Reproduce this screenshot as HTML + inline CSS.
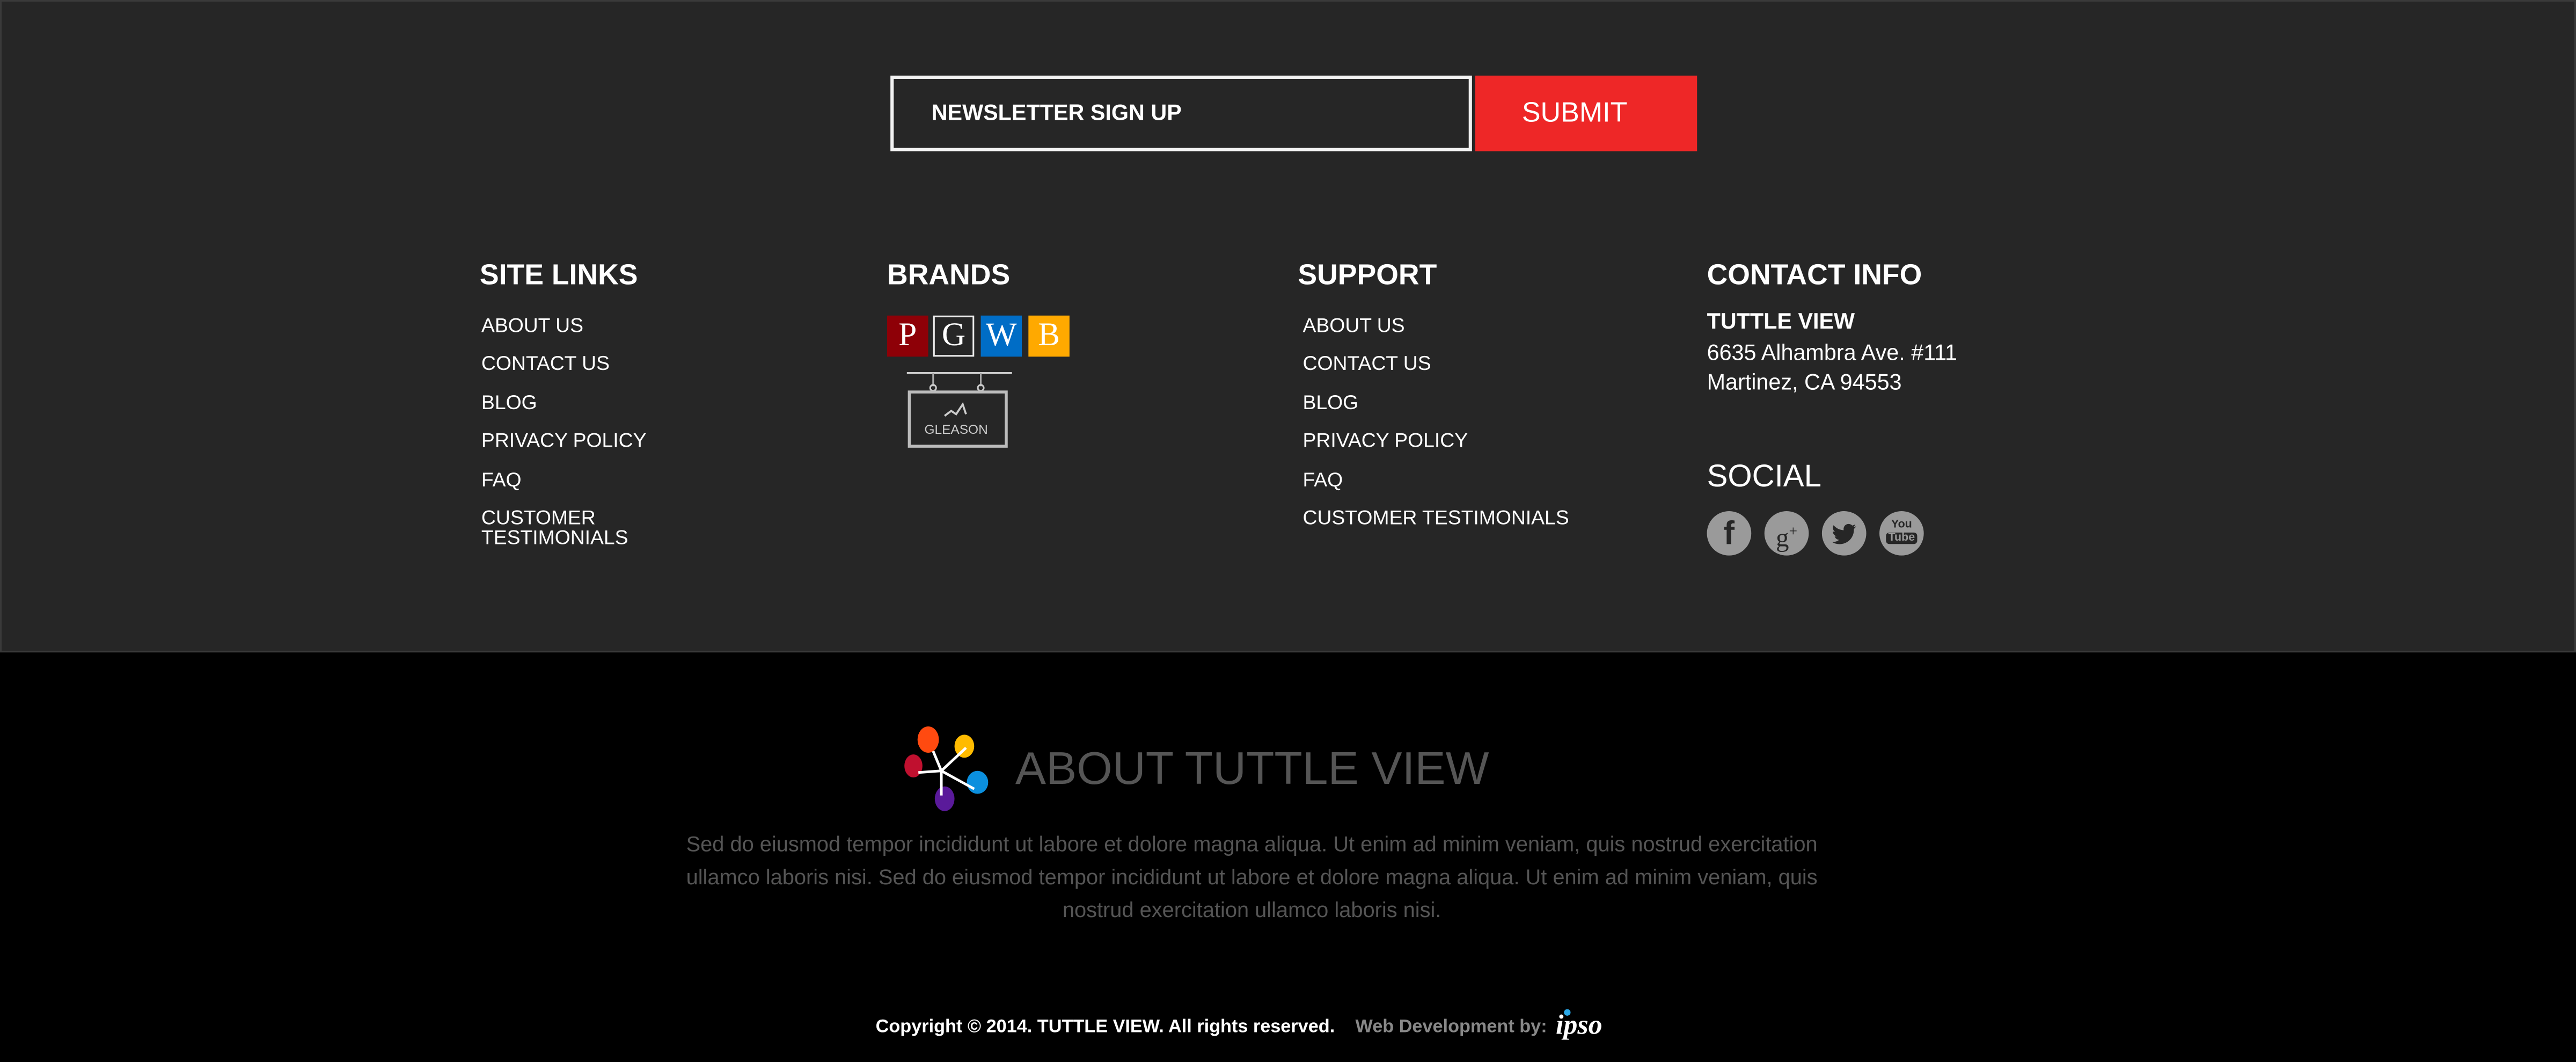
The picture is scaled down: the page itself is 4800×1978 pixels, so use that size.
<!DOCTYPE html>
<html><head><meta charset="utf-8"><style>
*{margin:0;padding:0;box-sizing:border-box}
html,body{width:4800px;height:1977px;overflow:hidden;background:#000}
#s{position:absolute;left:0;top:0;width:1568px;height:646px;transform:scale(3.0612);transform-origin:0 0;font-family:"Liberation Sans",sans-serif;color:#fff}
.top{position:absolute;left:0;top:0;width:1568px;height:397px;background:#262626;border:1px solid #3a3a3a}
.bot{position:absolute;left:0;top:397px;width:1568px;height:249px;background:#000}
.a{position:absolute;white-space:nowrap}
.h{font-size:17.5px;font-weight:bold;line-height:20px}
.l{font-size:12.2px;line-height:14px}
.sq{position:absolute;top:192px;width:25px;height:25px;font-family:"Liberation Serif",serif;font-size:20px;line-height:25px;text-align:center;color:#fff}
.ci{position:absolute;top:311px;width:27px;height:27px;border-radius:50%;background:#9a9a9a;color:#262626;text-align:center;font-weight:bold}
.p{font-size:13px;color:#555;line-height:20px;width:1568px;text-align:center;left:-22px}
</style></head><body><div id="s">
<div class="top"></div><div class="bot"></div>
<div class="a" style="left:542px;top:46px;width:354px;height:46px;border:2px solid #f2f2f2;background:#262626"></div>
<div class="a" style="left:567px;top:61px;font-size:13.5px;font-weight:bold;line-height:16px">NEWSLETTER SIGN UP</div>
<div class="a" style="left:898px;top:46px;width:135px;height:46px;background:#ee2727;font-size:17px;line-height:46px;text-align:center;padding-right:14px">SUBMIT</div>

<div class="a h" style="left:292px;top:157px">SITE LINKS</div>
<div class="a h" style="left:540px;top:157px">BRANDS</div>
<div class="a h" style="left:790px;top:157px">SUPPORT</div>
<div class="a h" style="left:1039px;top:157px">CONTACT INFO</div>

<div class="a l" style="left:293px;top:191px">ABOUT US</div>
<div class="a l" style="left:293px;top:214px">CONTACT US</div>
<div class="a l" style="left:293px;top:238px">BLOG</div>
<div class="a l" style="left:293px;top:261px">PRIVACY POLICY</div>
<div class="a l" style="left:293px;top:285px">FAQ</div>
<div class="a l" style="left:293px;top:309px;line-height:12px">CUSTOMER<br>TESTIMONIALS</div>

<div class="a l" style="left:793px;top:191px">ABOUT US</div>
<div class="a l" style="left:793px;top:214px">CONTACT US</div>
<div class="a l" style="left:793px;top:238px">BLOG</div>
<div class="a l" style="left:793px;top:261px">PRIVACY POLICY</div>
<div class="a l" style="left:793px;top:285px">FAQ</div>
<div class="a l" style="left:793px;top:308px">CUSTOMER TESTIMONIALS</div>

<div class="sq" style="left:540px;background:#8e0007">P</div>
<div class="sq" style="left:568px;background:#262626;border:1.5px solid #eee;line-height:22px">G</div>
<div class="sq" style="left:597px;background:#006dc6">W</div>
<div class="sq" style="left:626px;background:#ffa900">B</div>
<svg class="a" style="left:549px;top:222px" width="70" height="55" viewBox="0 0 70 55">
<line x1="3" y1="5" x2="67" y2="5" stroke="#ccc" stroke-width="1.2"/>
<line x1="19" y1="5" x2="19" y2="13" stroke="#aaa"/><line x1="48" y1="5" x2="48" y2="13" stroke="#aaa"/>
<circle cx="19" cy="14" r="1.8" fill="none" stroke="#ccc"/><circle cx="48" cy="14" r="1.8" fill="none" stroke="#ccc"/>
<rect x="4.5" y="16.5" width="59" height="33" fill="#262626" stroke="#bbb" stroke-width="1.8"/>
<text x="33" y="42" font-size="8" fill="#ccc" text-anchor="middle" font-family="Liberation Sans">GLEASON</text>
<path d="M26 31 l4 -3 3 2 4 -6 2 6" stroke="#ccc" fill="none" stroke-width="1.2"/>
</svg>

<div class="a" style="left:1039px;top:189px;font-size:13.5px;font-weight:bold;line-height:14px">TUTTLE VIEW</div>
<div class="a" style="left:1039px;top:206px;font-size:13.5px;line-height:18px">6635 Alhambra Ave. #111<br>Martinez, CA 94553</div>
<div class="a" style="left:1039px;top:281px;font-size:19px;line-height:20px">SOCIAL</div>
<div class="ci" style="left:1039px;font-size:20px;line-height:29px;font-family:'Liberation Sans'">f</div>
<div class="ci" style="left:1074px;font-size:16px;line-height:25px;font-weight:normal;font-family:'Liberation Serif',serif">g<sup style="font-size:9px">+</sup></div>
<div class="ci" style="left:1109px"><svg width="27" height="27" viewBox="0 0 24 24"><path d="M18.5 8.2c-.5.2-1 .4-1.6.4.6-.3 1-.9 1.2-1.5-.5.3-1.1.5-1.7.7a2.7 2.7 0 0 0-4.6 2.5C9.500 10.200 7.600 9.100 6.300 7.600c-.7 1.200-.3 2.800.8 3.600-.4 0-.8-.1-1.200-.3 0 1.300.9 2.400 2.200 2.700-.4.1-.8.1-1.200 0 .3 1.100 1.400 1.900 2.500 1.900A5.500 5.500 0 0 1 5.400 16.600 7.700 7.700 0 0 0 17.300 10v-.4c.5-.4 1-.9 1.200-1.400z" fill="#262626"/></svg></div>
<div class="ci" style="left:1144px;font-size:7px;line-height:8px;padding-top:5px;font-family:'Liberation Sans Narrow','Liberation Sans'">You<br><span style="background:#262626;color:#9a9a9a;border-radius:2px;padding:0 1px">Tube</span></div>

<svg class="a" style="left:547px;top:439px" width="62" height="58" viewBox="0 0 62 58">
<ellipse cx="18" cy="11" rx="6.5" ry="8" fill="#ff4a10"/>
<ellipse cx="40" cy="15" rx="6" ry="7" fill="#ffbb00"/>
<ellipse cx="9" cy="27" rx="5.5" ry="7" fill="#c0102f"/>
<ellipse cx="48" cy="37" rx="6.5" ry="7" fill="#0b8fde"/>
<ellipse cx="28" cy="47" rx="6" ry="7.5" fill="#5a1a9a"/>
<path d="M21 18 L26 30 L41 16 M26 30 L12 31 M26 30 L46 41 M26 30 L26 45" stroke="#fff" stroke-width="1.6" fill="none"/>
</svg>
<div class="a" style="left:618px;top:451px;font-size:28px;color:#555;line-height:34px">ABOUT TUTTLE VIEW</div>
<div class="a p" style="top:504px">Sed do eiusmod tempor incididunt ut labore et dolore magna aliqua. Ut enim ad minim veniam, quis nostrud exercitation</div>
<div class="a p" style="top:524px">ullamco laboris nisi. Sed do eiusmod tempor incididunt ut labore et dolore magna aliqua. Ut enim ad minim veniam, quis</div>
<div class="a p" style="top:544px">nostrud exercitation ullamco laboris nisi.</div>
<div class="a" style="left:533px;top:617px;font-size:11.2px;font-weight:bold;line-height:16px">Copyright © 2014. TUTTLE VIEW. All rights reserved.</div>
<div class="a" style="left:825px;top:617px;font-size:11.2px;font-weight:bold;color:#888;line-height:16px">Web Development by:</div>
<div class="a" style="left:947px;top:614px;font-size:17px;font-weight:bold;font-style:italic;line-height:20px;font-family:'Liberation Serif',serif">ipso</div>
<div class="a" style="left:952px;top:614px;width:4px;height:4px;border-radius:50%;background:#2aa8e8"></div>
</div></body></html>
